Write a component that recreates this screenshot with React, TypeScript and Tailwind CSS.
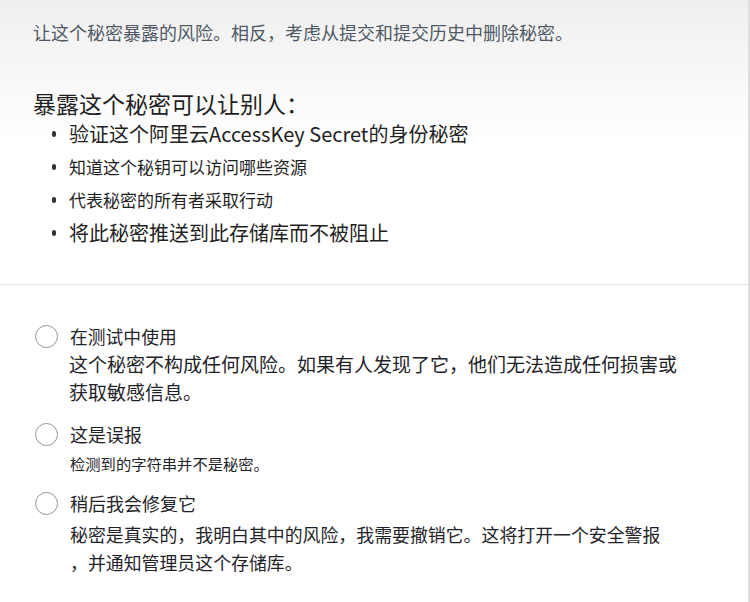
import React from "react";

const font = { fontFamily: '"Noto Sans CJK SC", "Noto Sans", sans-serif' };

function Radio() {
  return (
    <span className="block w-[23px] h-[23px] rounded-full border-[1.5px] border-[#8f959c] bg-white shrink-0" />
  );
}

function Bullet({ children, cls }: { children: React.ReactNode; cls: string }) {
  return (
    <li className="h-[33px] flex items-center">
      <span className="w-[17px] flex shrink-0">
        <span className="block w-[4px] h-[6px] rounded-full bg-[#333]" />
      </span>
      <span className={cls}>{children}</span>
    </li>
  );
}

export default function App() {
  return (
    <div
      className="w-[750px] h-[602px] bg-white text-[#1f2328] border-r-2 border-[#dedede] overflow-hidden"
      style={font}
    >
      <div className="h-[285px] border-b border-[#e1e4e8] bg-gradient-to-b from-[#efefef] via-white to-white pl-[33px] pt-[20px]">
        <p className="text-[18px] leading-[24px] text-[#4f5966]">
          让这个秘密暴露的风险。相反，考虑从提交和提交历史中删除秘密。
        </p>
        <h2 className="mt-[45px] text-[23px] leading-[28px] text-[#1f1f1f]">暴露这个秘密可以让别人：</h2>
        <ul className="pl-[19px]">
          <Bullet cls="text-[20px] text-[#1f1f1f]">验证这个阿里云AccessKey Secret的身份秘密</Bullet>
          <Bullet cls="text-[17px] text-[#1f1f1f]">知道这个秘钥可以访问哪些资源</Bullet>
          <Bullet cls="text-[17px] text-[#1f1f1f]">代表秘密的所有者采取行动</Bullet>
          <Bullet cls="text-[20px] text-[#1f1f1f]">将此秘密推送到此存储库而不被阻止</Bullet>
        </ul>
      </div>
      <div className="pl-[35px] pt-[37px]">
        <div>
          <div className="flex items-center gap-[12px] h-[28px]">
            <Radio />
            <span className="text-[17.8px]">在测试中使用</span>
          </div>
          <p className="pl-[34px] text-[19px] leading-[28px]">
            这个秘密不构成任何风险。如果有人发现了它，他们无法造成任何损害或
            <br />
            获取敏感信息。
          </p>
        </div>
        <div className="mt-[14px]">
          <div className="flex items-center gap-[12px] h-[28px]">
            <Radio />
            <span className="text-[18px]">这是误报</span>
          </div>
          <p className="mt-[3px] pl-[35px] text-[15.3px] leading-[24px]">检测到的字符串并不是秘密。</p>
        </div>
        <div className="mt-[14px]">
          <div className="flex items-center gap-[12px] h-[28px]">
            <Radio />
            <span className="text-[18px]">稍后我会修复它</span>
          </div>
          <p className="mt-[3px] pl-[35px] text-[17.9px] leading-[28px]">
            秘密是真实的，我明白其中的风险，我需要撤销它。这将打开一个安全警报
            <br />
            ，并通知管理员这个存储库。
          </p>
        </div>
      </div>
    </div>
  );
}
